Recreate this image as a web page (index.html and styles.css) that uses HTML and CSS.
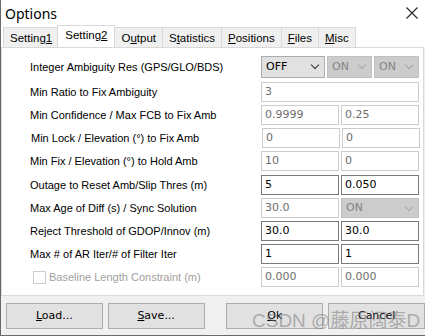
FILE: index.html
```html
<!DOCTYPE html>
<html lang="en">
<head>
    <meta charset="UTF-8">
    <meta name="viewport" content="width=device-width, initial-scale=1.0">
    <title>Options</title>
    <link rel="stylesheet" href="styles.css">
</head>
<body>
    <div class="window">
        <!-- Title bar -->
        <div class="titlebar">
            <span class="title">Options</span>
            <svg class="close" width="12" height="12" viewBox="0 0 12 12">
                <path d="M0.5 0.5 L11.5 11.5 M11.5 0.5 L0.5 11.5" stroke="#222" stroke-width="1.1" fill="none"/>
            </svg>
        </div>

        <!-- Tabs -->
        <div class="tabs">
            <div class="tab">Setting<u>1</u></div>
            <div class="tab active">Setting<u>2</u></div>
            <div class="tab">O<u>u</u>tput</div>
            <div class="tab">S<u>t</u>atistics</div>
            <div class="tab"><u>P</u>ositions</div>
            <div class="tab"><u>F</u>iles</div>
            <div class="tab"><u>M</u>isc</div>
        </div>

        <!-- Setting2 page -->
        <div class="panel">
            <div class="row first">
                <label>Integer Ambiguity Res (GPS/GLO/BDS)</label>
                <div class="controls three">
                    <div class="combo">OFF<span class="arrow"></span></div>
                    <div class="combo disabled">ON<span class="arrow"></span></div>
                    <div class="combo disabled">ON<span class="arrow"></span></div>
                </div>
            </div>
            <div class="row">
                <label>Min Ratio to Fix Ambiguity</label>
                <div class="controls one">
                    <div class="field disabled">3</div>
                </div>
            </div>
            <div class="row">
                <label>Min Confidence / Max FCB to Fix Amb</label>
                <div class="controls two">
                    <div class="field disabled">0.9999</div>
                    <div class="field disabled">0.25</div>
                </div>
            </div>
            <div class="row">
                <label class="indent">Min Lock / Elevation (&deg;) to Fix Amb</label>
                <div class="controls two">
                    <div class="field disabled">0</div>
                    <div class="field disabled">0</div>
                </div>
            </div>
            <div class="row">
                <label>Min Fix / Elevation (&deg;) to Hold Amb</label>
                <div class="controls two">
                    <div class="field disabled">10</div>
                    <div class="field disabled">0</div>
                </div>
            </div>

            <div class="row group">
                <label>Outage to Reset Amb/Slip Thres (m)</label>
                <div class="controls two">
                    <div class="field">5</div>
                    <div class="field">0.050</div>
                </div>
            </div>
            <div class="row">
                <label>Max Age of Diff (s) / Sync Solution</label>
                <div class="controls two">
                    <div class="field disabled">30.0</div>
                    <div class="combo disabled">ON<span class="arrow"></span></div>
                </div>
            </div>
            <div class="row">
                <label>Reject Threshold of GDOP/Innov (m)</label>
                <div class="controls two">
                    <div class="field">30.0</div>
                    <div class="field">30.0</div>
                </div>
            </div>
            <div class="row">
                <label>Max # of AR Iter/# of Filter Iter</label>
                <div class="controls two">
                    <div class="field">1</div>
                    <div class="field">1</div>
                </div>
            </div>
            <div class="row">
                <label class="check"><span class="box"></span>Baseline Length Constraint (m)</label>
                <div class="controls two">
                    <div class="field disabled">0.000</div>
                    <div class="field disabled">0.000</div>
                </div>
            </div>
        </div>

        <!-- Bottom buttons -->
        <div class="buttons">
            <div class="btn"><u>L</u>oad...</div>
            <div class="btn"><u>S</u>ave...</div>
            <div class="spacer"></div>
            <div class="btn"><u>O</u>k</div>
            <div class="btn">Cancel</div>
        </div>

        <div class="watermark">CSDN @藤原阔泰D</div>
    </div>
</body>
</html>
```

FILE: styles.css
```css
/* Global */
body {
    margin: 0;
    padding: 0;
    background-color: #f0f0f0;
    font-family: "Liberation Sans", Arial, "Noto Sans CJK SC", sans-serif;
    font-size: 11px;
    color: #000;
}

.window {
    position: relative;
    width: 424px;
    height: 335px;
    background-color: #f0f0f0;
    border-left: 1px solid #6a6a6a;
    border-bottom: 1px solid #6a6a6a;
    overflow: hidden;
}

/* Title bar */
.titlebar {
    height: 25px;
    display: flex;
    align-items: center;
    justify-content: space-between;
    padding: 0 7px 0 4px;
    background-color: #fff;
}

.title {
    font-family: "Noto Sans", sans-serif;
    font-size: 14px;
    padding-top: 1px;
}

/* Tabs */
.tabs {
    display: flex;
    align-items: flex-end;
    height: 22px;
    padding-left: 2px;
    background-color: #fff;
}

.tab {
    height: 19px;
    line-height: 20px;
    padding: 0 6px;
    background-color: #f0f0f0;
    border: 1px solid #d9d9d9;
    border-bottom: none;
    margin-right: -1px;
    font-size: 11.5px;
}

.tab.active {
    height: 21px;
    line-height: 19px;
    background-color: #fff;
    margin: 0 -1px 0 -1px;
    padding: 0 7px;
    position: relative;
    z-index: 1;
}

/* Page */
.panel {
    margin: 0 1px 0 0;
    background-color: #fff;
    border: 1px solid #d9d9d9;
    padding-top: 8px;
    box-sizing: border-box;
    height: 249px;
}

.row {
    display: flex;
    align-items: center;
    height: 20px;
    margin-bottom: 3px;
}

.row.first {
    height: 22px;
    margin-bottom: 4px;
}

.row.group {
    margin-top: 4px;
}

.row label {
    width: 231px;
    padding-left: 28px;
    white-space: nowrap;
}

.row label.indent {
    padding-left: 29px;
}

.row label.check {
    display: flex;
    align-items: center;
    color: #a0a0a0;
    padding-left: 31px;
    width: 228px;
}

.box {
    width: 11px;
    height: 11px;
    border: 1px solid #cccccc;
    margin-right: 3px;
}

.controls {
    display: flex;
    gap: 2px;
    width: 158px;
    height: 100%;
}

.controls.two > * {
    width: 78px;
}

.controls.one > * {
    width: 158px;
}

.controls.three .combo:first-child {
    width: 64px;
}

.controls.three .combo {
    width: 45px;
}

/* Edit boxes */
.field {
    box-sizing: border-box;
    height: 100%;
    border: 1px solid #7a7a7a;
    padding: 0 3px;
    line-height: 18px;
    font-family: "DejaVu Sans", sans-serif;
    font-size: 11px;
}

.field.disabled {
    border-color: #cccccc;
    color: #6d6d6d;
}

/* Combo boxes */
.combo {
    position: relative;
    box-sizing: border-box;
    height: 100%;
    background-color: #e1e1e1;
    border: 1px solid #adadad;
    padding: 0 4px;
    line-height: 19px;
    font-family: "DejaVu Sans", sans-serif;
    font-size: 11px;
}

.combo.disabled {
    background-color: #cccccc;
    border-color: #bfbfbf;
    color: #838383;
}

.row .controls.two .combo {
    line-height: 18px;
}

.arrow {
    position: absolute;
    right: 6px;
    top: 5px;
    width: 5px;
    height: 5px;
    border-right: 1px solid #333;
    border-bottom: 1px solid #333;
    transform: rotate(45deg);
}

.combo.disabled .arrow {
    border-color: #a8a8a8;
}

/* Bottom buttons */
.buttons {
    display: flex;
    gap: 5px;
    padding: 7px 0 0 5px;
}

.btn {
    width: 95px;
    height: 24px;
    line-height: 24px;
    text-align: center;
    background-color: #e1e1e1;
    border: 1px solid #adadad;
    font-family: "DejaVu Sans", sans-serif;
    font-size: 11px;
}

.spacer {
    width: 12px;
}

/* Screenshot watermark */
.watermark {
    position: absolute;
    left: 251px;
    top: 305px;
    font-family: "Liberation Sans", "Noto Sans CJK SC", sans-serif;
    font-size: 19px;
    color: rgba(120, 120, 120, 0.55);
    white-space: nowrap;
}
```
